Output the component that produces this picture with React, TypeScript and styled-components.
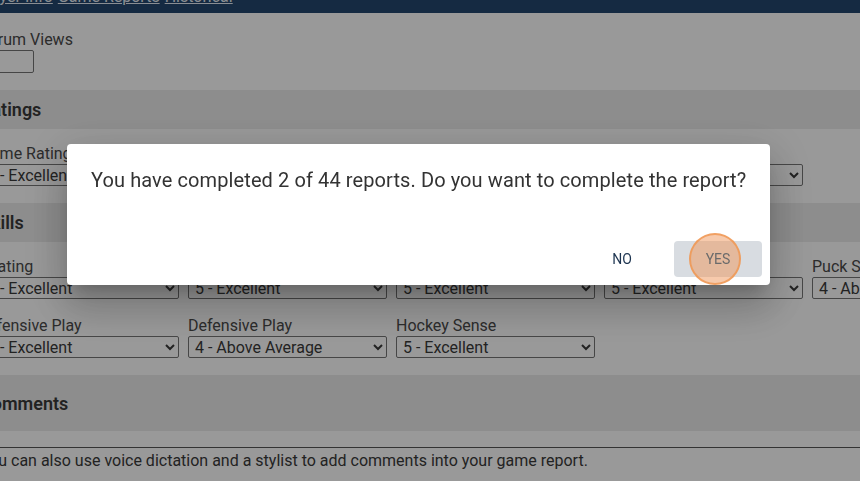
import styled, { createGlobalStyle } from "styled-components";

const GlobalStyle = createGlobalStyle`
  html, body {
    margin: 0;
    padding: 0;
    overflow: hidden;
    background: #ffffff;
    font-family: Roboto, "Liberation Sans", sans-serif;
  }
`;

const Header = styled.header`
  background-color: #23466e;
  height: 34px;
  margin-top: -21px;
  display: flex;
  align-items: flex-end;
  padding: 0 0 7px 0;
  box-sizing: border-box;
`;

const Nav = styled.nav`
  display: flex;
  gap: 5px;
  margin-left: -23px;
`;

const NavLink = styled.a`
  color: #e6ecf3;
  font-size: 16px;
  line-height: 18px;
  text-decoration: underline;
`;

const Page = styled.main`
  margin-left: -20px;
  width: 1100px;
  padding-top: 18px;
  color: #4a4a4a;
`;

const Field = styled.label`
  display: flex;
  flex-direction: column;
  font-size: 16px;
  line-height: 19px;
  width: 199px;
`;

const Label = styled.span`
  height: 18px;
  line-height: 18px;
  white-space: nowrap;
`;

const TextInput = styled.input`
  width: 54px;
  height: 23px;
  box-sizing: border-box;
  border: 1px solid #767676;
  border-radius: 2px;
  margin-top: 1px;
`;

const SectionBar = styled.div<{ $tall?: boolean }>`
  background-color: #ececec;
  height: ${(p) => (p.$tall ? 56 : 39)}px;
  display: flex;
  align-items: center;
  font-size: 18px;
  font-weight: 600;
  color: #3a3a3a;
  margin: 17px 0 16px;
  width: 880px;
`;

const Row = styled.div`
  display: flex;
  gap: 9px;
  & + & {
    margin-top: 18px;
  }
`;

const Select = styled.select`
  width: 199px;
  height: 22px;
  box-sizing: border-box;
  font-family: Roboto, "Liberation Sans", sans-serif;
  font-size: 16px;
  color: #3a3a3a;
  border: 1px solid #767676;
  border-radius: 2px;
  background: #ffffff;
  padding: 0 2px;
  margin-top: 1px;
`;

const Divider = styled.hr`
  border: none;
  border-top: 1px solid #555;
  margin: 0;
  width: 880px;
`;

const Helper = styled.p`
  margin: 3px 0 0;
  font-size: 16px;
  line-height: 19px;
  color: #3a3a3a;
`;

const Backdrop = styled.div`
  position: fixed;
  inset: 0;
  background: rgba(0, 0, 0, 0.4);
  padding: 144px 0 0 67px;
`;

const Dialog = styled.div`
  width: 703px;
  height: 141px;
  box-sizing: border-box;
  background: #ffffff;
  border-radius: 4px;
  box-shadow: 0 11px 15px -7px rgba(0, 0, 0, 0.2), 0 24px 38px 3px rgba(0, 0, 0, 0.14),
    0 9px 46px 8px rgba(0, 0, 0, 0.12);
  display: flex;
  flex-direction: column;
  justify-content: space-between;
  padding: 21px 8px 8px 24px;
`;

const Message = styled.p`
  margin: 0;
  font-size: 20px;
  line-height: 30px;
  letter-spacing: 0.1px;
  color: #333333;
`;

const Actions = styled.div`
  display: flex;
  justify-content: flex-end;
  align-items: center;
  gap: 20px;
`;

const Button = styled.button<{ $filled?: boolean }>`
  position: relative;
  font-family: Roboto, "Liberation Sans", sans-serif;
  font-size: 14px;
  text-transform: uppercase;
  border: none;
  border-radius: 4px;
  height: 36px;
  width: ${(p) => (p.$filled ? 88 : 64)}px;
  background: ${(p) => (p.$filled ? "#d8dce1" : "transparent")};
  color: ${(p) => (p.$filled ? "#6b6b6b" : "#1d3450")};
  padding: 0;
`;

const ClickMarker = styled.span`
  position: absolute;
  left: 50%;
  top: 50%;
  width: 52px;
  height: 52px;
  margin: -26px 0 0 -29px;
  border-radius: 50%;
  background: rgba(240, 150, 90, 0.5);
  border: 2px solid rgba(240, 150, 80, 0.8);
  box-sizing: border-box;
`;

const ButtonText = styled.span`
  position: relative;
`;

const options = ["5 - Excellent", "4 - Above Average", "3 - Average", "2 - Below Average", "1 - Poor"];

const RatingSelect = ({ value }: { value: string }) => (
  <Select defaultValue={value}>
    {options.map((o) => (
      <option key={o}>{o}</option>
    ))}
  </Select>
);

const RatingField = ({ label, value }: { label: string; value: string }) => (
  <Field>
    <Label>{label}</Label>
    <RatingSelect value={value} />
  </Field>
);

export default function App() {
  return (
    <>
      <GlobalStyle />
      <Header>
        <Nav>
          <NavLink href="#">Player Info</NavLink>
          <NavLink href="#">Game Reports</NavLink>
          <NavLink href="#">Historical</NavLink>
        </Nav>
      </Header>
      <Page>
        <Field>
          <Label>Forum Views</Label>
          <TextInput type="text" />
        </Field>

        <SectionBar>Ratings</SectionBar>
        <Row>
          <RatingField label="Game Rating" value="5 - Excellent" />
          <RatingField label="Effort" value="5 - Excellent" />
          <RatingField label="Potential" value="5 - Excellent" />
          <RatingField label="Level" value="5 - Excellent" />
        </Row>

        <SectionBar>Skills</SectionBar>
        <Row>
          <RatingField label="Skating" value="5 - Excellent" />
          <RatingField label="Shooting" value="5 - Excellent" />
          <RatingField label="Passing" value="5 - Excellent" />
          <RatingField label="Hands" value="5 - Excellent" />
          <RatingField label="Puck Skills" value="4 - Above Average" />
        </Row>
        <Row>
          <RatingField label="Offensive Play" value="5 - Excellent" />
          <RatingField label="Defensive Play" value="4 - Above Average" />
          <RatingField label="Hockey Sense" value="5 - Excellent" />
        </Row>

        <SectionBar $tall>Comments</SectionBar>
        <Divider />
        <Helper>You can also use voice dictation and a stylist to add comments into your game report.</Helper>
      </Page>

      <Backdrop>
        <Dialog role="dialog">
          <Message>You have completed 2 of 44 reports. Do you want to complete the report?</Message>
          <Actions>
            <Button>No</Button>
            <Button $filled>
              <ClickMarker />
              <ButtonText>Yes</ButtonText>
            </Button>
          </Actions>
        </Dialog>
      </Backdrop>
    </>
  );
}
